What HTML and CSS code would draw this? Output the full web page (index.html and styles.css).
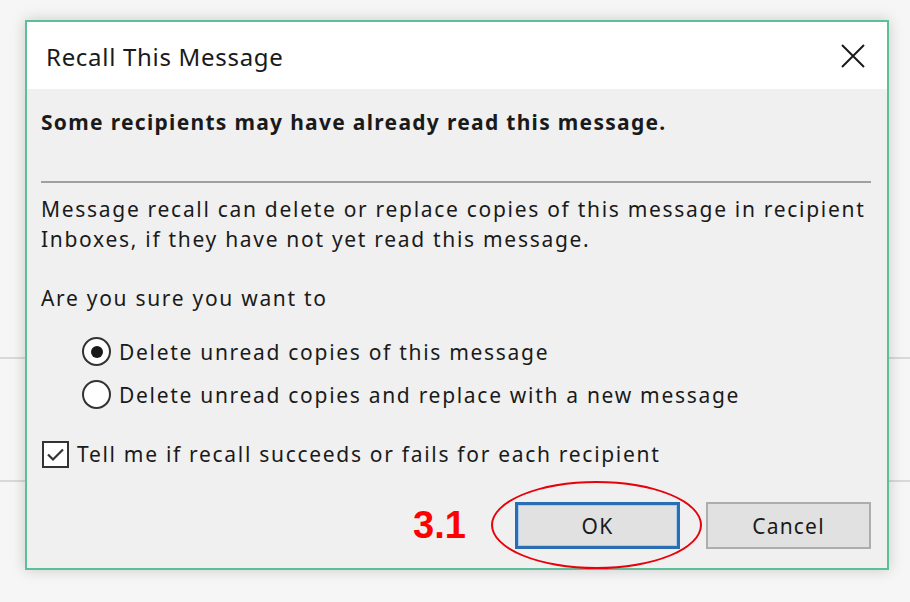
FILE: index.html
```html
<!DOCTYPE html>
<html lang="en">
<head>
    <meta charset="UTF-8">
    <title>Recall This Message</title>
    <link rel="stylesheet" href="styles.css">
</head>
<body>
    <div class="dialog">
        <div class="title-bar">
            <span class="title">Recall This Message</span>
            <button class="close" aria-label="Close">
                <svg width="24" height="24" viewBox="0 0 24 24">
                    <path d="M1 1 L23 23 M23 1 L1 23" stroke="#1a1a1a" stroke-width="2" fill="none"/>
                </svg>
            </button>
        </div>
        <div class="dialog-body">
            <p class="warning">Some recipients may have already read this message.</p>
            <hr class="divider">
            <p class="info">Message recall can delete or replace copies of this message in recipient<br>Inboxes, if they have not yet read this message.</p>
            <p class="question">Are you sure you want to</p>
            <div class="options">
                <label class="option">
                    <span class="radio checked"></span>
                    Delete unread copies of this message
                </label>
                <label class="option">
                    <span class="radio"></span>
                    Delete unread copies and replace with a new message
                </label>
            </div>
            <label class="option tell">
                <span class="checkbox">
                    <svg width="23" height="23" viewBox="0 0 23 23">
                        <path d="M4 11.5 L9 16.5 L19 6.5" stroke="#333" stroke-width="2.2" fill="none"/>
                    </svg>
                </span>
                Tell me if recall succeeds or fails for each recipient
            </label>
            <div class="buttons">
                <span class="step">3.1</span>
                <button class="button default">OK</button>
                <button class="button">Cancel</button>
                <span class="ring"></span>
            </div>
        </div>
    </div>
</body>
</html>
```

FILE: styles.css
```css
body {
    margin: 0;
    width: 910px;
    height: 602px;
    overflow: hidden;
    font-family: "Noto Sans", "Open Sans", sans-serif;
    color: #1a1a1a;
    background-color: #f6f6f6;
    background-image: linear-gradient(to bottom, transparent 357px, #d9d9d9 357px, #d9d9d9 359px, transparent 359px, transparent 480px, #d9d9d9 480px, #d9d9d9 482px, transparent 482px);
}
.dialog {
    margin: 20px 0 0 25px;
    width: 860px;
    height: 546px;
    border: 2px solid #5cbf98;
    background-color: #f0f0f0;
    box-shadow: 0 0 14px rgba(0, 0, 0, 0.18);
    display: flex;
    flex-direction: column;
}
.title-bar {
    height: 67px;
    background-color: #fff;
    display: flex;
    align-items: center;
    justify-content: space-between;
    padding: 0 22px 0 19px;
}
.title {
    font-size: 24px;
    letter-spacing: 0.7px;
    margin-top: 2px;
}
.close {
    border: none;
    background: none;
    padding: 0;
    width: 24px;
    height: 24px;
}
.dialog-body {
    padding: 18px 16px 0 14px;
    font-size: 21px;
    letter-spacing: 1.7px;
    position: relative;
}
p {
    margin: 0;
    line-height: 30px;
}
.warning {
    font-weight: bold;
    letter-spacing: 1.3px;
}
.divider {
    border: none;
    border-top: 2px solid #a0a0a0;
    margin: 44px 0 0 0;
}
.info {
    margin-top: 11px;
}
.question {
    margin-top: 29px;
}
.options {
    display: flex;
    flex-direction: column;
    gap: 14px;
    margin: 24px 0 0 41px;
}
.option {
    display: flex;
    align-items: center;
    gap: 8px;
    line-height: 28px;
}
.radio {
    width: 25px;
    height: 25px;
    border: 2px solid #333;
    border-radius: 50%;
    background-color: #fff;
    display: flex;
    align-items: center;
    justify-content: center;
}
.radio.checked::after {
    content: "";
    width: 12px;
    height: 12px;
    border-radius: 50%;
    background-color: #1a1a1a;
}
.tell {
    margin-top: 31px;
    margin-left: 1px;
}
.checkbox {
    width: 23px;
    height: 23px;
    border: 2px solid #333;
    background-color: #fff;
    display: flex;
}
.buttons {
    display: flex;
    justify-content: flex-end;
    align-items: center;
    gap: 26px;
    margin-top: 34px;
    position: relative;
}
.button {
    width: 165px;
    height: 47px;
    font-family: inherit;
    font-size: 21px;
    letter-spacing: 1.2px;
    color: #1a1a1a;
    background-color: #e1e1e1;
    border: 2px solid #adadad;
}
.button.default {
    border: 3px solid #2a6db3;
    box-shadow: inset 0 0 0 1px #a8cdef;
}
.step {
    position: absolute;
    left: 372px;
    top: 2px;
    font-family: "Liberation Sans", Arial, sans-serif;
    font-weight: bold;
    font-size: 38px;
    letter-spacing: 0;
    color: #f00;
}
.ring {
    position: absolute;
    left: 450px;
    top: -21px;
    width: 207px;
    height: 84px;
    border: 2px solid #e8000b;
    border-radius: 50%;
}
```
